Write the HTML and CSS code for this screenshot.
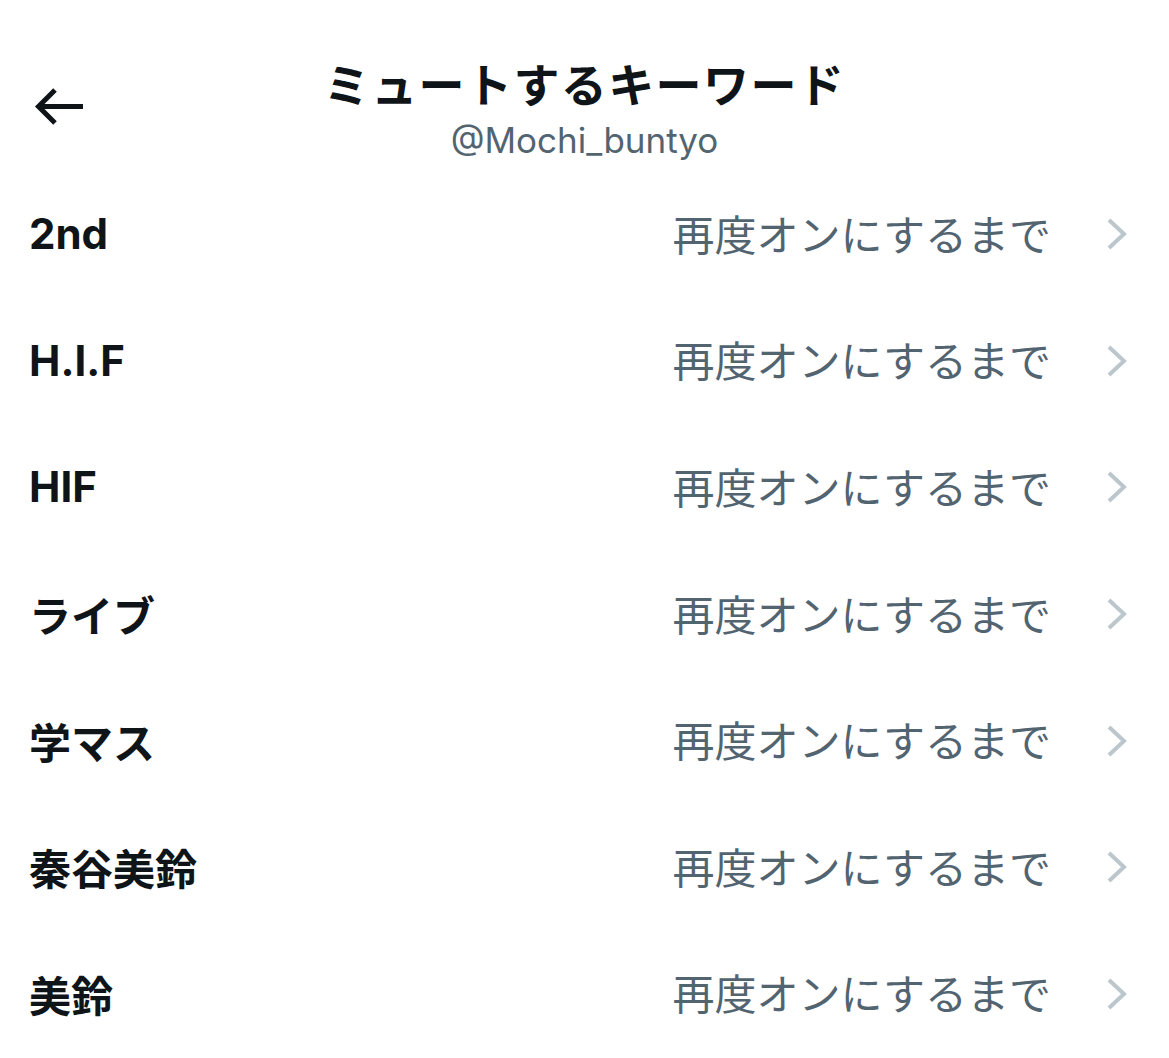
FILE: index.html
```html
<!DOCTYPE html>
<html lang="ja">
  <head>
    <meta charset="UTF-8" />
    <meta name="viewport" content="width=device-width, initial-scale=1.0" />
    <title>ミュートするキーワード</title>
    <link rel="stylesheet" href="styles.css">
  </head>
  <body>
    <header class="top-bar">
      <a href="#" class="back-button" aria-label="戻る">
        <svg width="52" height="46" viewBox="0 0 52 46">
          <path d="M50 22.5H6M22 6L5.5 22.5L22 39" fill="none" stroke="#0f1419" stroke-width="5"/>
        </svg>
      </a>
      <div class="top-title">
        <h1>ミュートするキーワード</h1>
        <p class="handle">@Mochi_buntyo</p>
      </div>
      <div></div>
    </header>

    <ul class="keyword-list">
      <li class="keyword-row">
        <span class="keyword">2nd</span>
        <span class="duration">再度オンにするまで</span>
        <svg class="chevron" width="24" height="34" viewBox="0 0 24 34"><path d="M4 3L19 17L4 31" /></svg>
      </li>
      <li class="keyword-row">
        <span class="keyword">H.I.F</span>
        <span class="duration">再度オンにするまで</span>
        <svg class="chevron" width="24" height="34" viewBox="0 0 24 34"><path d="M4 3L19 17L4 31" /></svg>
      </li>
      <li class="keyword-row">
        <span class="keyword">HIF</span>
        <span class="duration">再度オンにするまで</span>
        <svg class="chevron" width="24" height="34" viewBox="0 0 24 34"><path d="M4 3L19 17L4 31" /></svg>
      </li>
      <li class="keyword-row">
        <span class="keyword">ライブ</span>
        <span class="duration">再度オンにするまで</span>
        <svg class="chevron" width="24" height="34" viewBox="0 0 24 34"><path d="M4 3L19 17L4 31" /></svg>
      </li>
      <li class="keyword-row">
        <span class="keyword">学マス</span>
        <span class="duration">再度オンにするまで</span>
        <svg class="chevron" width="24" height="34" viewBox="0 0 24 34"><path d="M4 3L19 17L4 31" /></svg>
      </li>
      <li class="keyword-row">
        <span class="keyword">秦谷美鈴</span>
        <span class="duration">再度オンにするまで</span>
        <svg class="chevron" width="24" height="34" viewBox="0 0 24 34"><path d="M4 3L19 17L4 31" /></svg>
      </li>
      <li class="keyword-row">
        <span class="keyword">美鈴</span>
        <span class="duration">再度オンにするまで</span>
        <svg class="chevron" width="24" height="34" viewBox="0 0 24 34"><path d="M4 3L19 17L4 31" /></svg>
      </li>
    </ul>
  </body>
</html>
```

FILE: styles.css
```css
* {
  margin: 0;
  padding: 0;
  box-sizing: border-box;
}

body {
  background-color: white;
  color: #0f1419;
  font-family: Inter, "Noto Sans CJK JP", sans-serif;
}

/* Header */
.top-bar {
  height: 172px;
  display: grid;
  grid-template-columns: 1fr auto 1fr;
  align-items: start;
}

.back-button {
  display: block;
  margin: 84px 0 0 33px;
  width: 52px;
  height: 46px;
}

.top-title {
  text-align: center;
  padding-top: 56px;
}

.top-title h1 {
  font-size: 46px;
  font-weight: bold;
  line-height: 58px;
  letter-spacing: 1.4px;
}

.handle {
  font-size: 35px;
  line-height: 44px;
  margin-top: 4px;
  color: #536471;
}

/* Keyword rows */
.keyword-list {
  list-style: none;
}

.keyword-row {
  height: 126.6px;
  display: flex;
  align-items: center;
  padding: 0 40px 0 29px;
}

.keyword {
  flex: 1;
  font-size: 42px;
  font-weight: bold;
  margin-top: -3px;
}

.duration {
  font-size: 42px;
  color: #536471;
  margin-right: 54px;
  margin-top: -6px;
}

.chevron {
  margin-top: -2px;
}

.chevron path {
  fill: none;
  stroke: #bcc6cd;
  stroke-width: 4;
}
```
